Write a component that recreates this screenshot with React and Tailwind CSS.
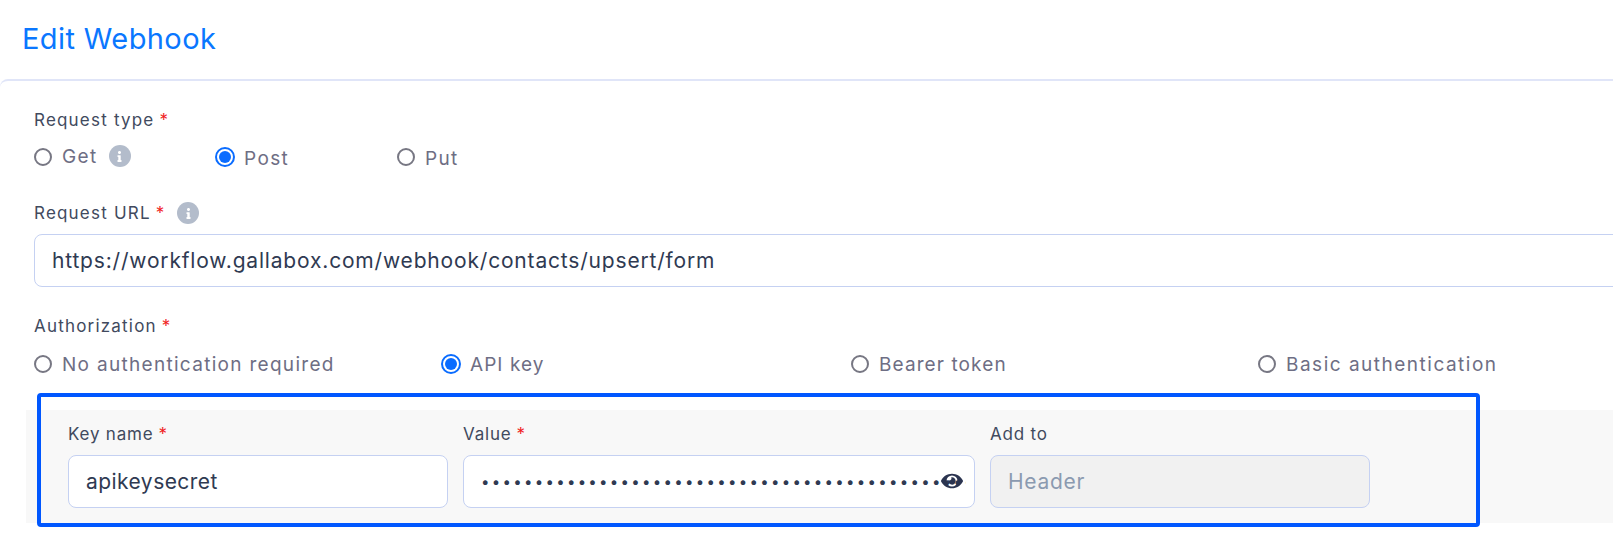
import React from "react";
import { FaEye, FaInfo } from "react-icons/fa";

const Star = () => <span className="text-[#f01e1e] ml-[5px]">*</span>;

const InfoDot = ({ className = "" }) => (
  <span className={`inline-flex w-[22px] h-[22px] rounded-full bg-[#b3bccb] items-center justify-center text-white ${className}`}>
    <FaInfo className="w-[11px] h-[11px]" />
  </span>
);

const Radio = ({ label, checked, className = "", textClass = "tracking-[1.35px]", children }) => (
  <label className={`flex items-center ${className}`}>
    {checked ? (
      <span className="w-[20px] h-[20px] rounded-full border-2 border-[#0a6cff] flex items-center justify-center shrink-0">
        <span className="w-[12px] h-[12px] rounded-full bg-[#0a6cff]" />
      </span>
    ) : (
      <span className="w-[18px] h-[18px] mx-px rounded-full border-2 border-[#777783] shrink-0" />
    )}
    <span className={`ml-[9px] text-[19px] leading-6 text-[#6e6e84] ${textClass}`}>{label}</span>
    {children}
  </label>
);

// top labels are spaced wider than the ones in the grey panel
const Label = ({ children, className = "tracking-[1.2px]" }) => (
  <div className={`text-[17px] leading-6 text-[#414a5e] ${className}`}>{children}</div>
);

const inputCls = "block h-[53px] w-full rounded-lg border border-[#c5d1f2] bg-white text-[21px] text-[#2f3a52] outline-none";

export default function App() {
  return (
    <div className="relative h-[549px] w-[1613px] overflow-hidden bg-white font-['Inter','Liberation_Sans',sans-serif]">
      <div className="h-[79px] pl-[22px] pt-[19px] text-[29px] leading-10 tracking-[0.4px] text-[#0a77ff]">Edit Webhook</div>
      <div className="h-[470px] rounded-tl-lg border-t-2 border-[#e0e5f8] pt-[27px]">
        <div className="pl-[34px]">
          <Label>Request type<Star /></Label>
          <div className="mt-[13px] flex h-6 -ml-px">
            <Radio label="Get" className="w-[183px]"><InfoDot className="ml-[11px] -mt-0.5" /></Radio>
            <Radio label="Post" className="w-[181px] -ml-px" textClass="tracking-[1.35px] translate-y-0.5" checked />
            <Radio label="Put" textClass="tracking-[1.35px] translate-y-0.5" />
          </div>
          <div className="mt-[32px] flex items-center h-6">
            <Label>Request URL<Star /></Label>
            <InfoDot className="ml-[12px]" />
          </div>
          <input readOnly value="https://workflow.gallabox.com/webhook/contacts/upsert/form" className={`${inputCls} mt-[9px] !w-[1640px] pl-[17px] tracking-[0.82px]`} />
          <div className="mt-[27px]">
            <Label>Authorization<Star /></Label>
          </div>
          <div className="mt-[14px] flex h-6 -ml-px">
            <Radio label="No authentication required" className="w-[409px]" textClass="tracking-[1.3px] translate-y-px" />
            <Radio label="API key" className="w-[409px] -ml-px" textClass="tracking-[1.05px] translate-y-px" checked />
            <Radio label="Bearer token" className="w-[407px]" textClass="tracking-[1.1px] translate-y-px" />
            <Radio label="Basic authentication" textClass="tracking-[1.5px] translate-y-px" />
          </div>
        </div>
        <div className="ml-[26px] mt-[34px] flex h-[113px] gap-[15px] bg-[#f8f8f8] pl-[42px] pt-[12px]">
          <div className="w-[380px]">
            <Label className="tracking-[0.8px]">Key name<Star /></Label>
            <input readOnly value="apikeysecret" className={`${inputCls} mt-[9px] pl-[17px] tracking-[0.45px]`} />
          </div>
          <div className="w-[512px]">
            <Label className="tracking-[0.8px]">Value<Star /></Label>
            <div className="relative mt-[9px]">
              <input readOnly type="password" value={"x".repeat(58)} className={`${inputCls} pl-[17px] pr-2 !text-[15px] tracking-[2.3px]`} />
              <FaEye className="absolute right-[12px] top-[15px] h-[22px] w-[22px] text-[#2b3450]" />
            </div>
          </div>
          <div className="w-[380px]">
            <Label className="tracking-[0.8px]">Add to</Label>
            <input readOnly value="Header" className={`${inputCls} mt-[9px] pl-[17px] tracking-[0.7px] !bg-[#f1f1f1] !text-[#8b9ab0]`} />
          </div>
        </div>
      </div>
      {/* annotation box drawn over the form */}
      <div className="absolute left-[37px] top-[393px] h-[134px] w-[1443px] rounded-sm border-4 border-[#0057ff]" />
    </div>
  );
}
